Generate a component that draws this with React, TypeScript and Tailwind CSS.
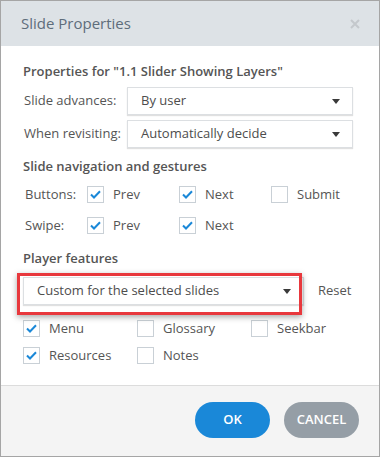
import React from 'react'

const font = { fontFamily: '"Open Sans", "Noto Sans", sans-serif' }

function Caret() {
    return (
        <svg width="8" height="5" viewBox="0 0 8 5" className="shrink-0">
            <path d="M0 0 H8 L4 5 Z" fill="#3a3a3a" />
        </svg>
    )
}

function Select({ value, className }: { value: string; className?: string }) {
    return (
        <div
            className={
                'h-[28px] flex items-center justify-between pl-[13px] pr-[12px] bg-white border border-[#dcdfe2] shadow-[0_1px_1px_rgba(0,0,0,0.12)] text-[13px] text-[#4d4d4d] ' +
                (className ?? '')
            }
        >
            <span>{value}</span>
            <Caret />
        </div>
    )
}

function Check({ label, checked }: { label: string; checked?: boolean }) {
    return (
        <div className="flex items-center gap-[9px]">
            <div className="w-[17px] h-[17px] border border-[#c9d0d6] bg-white flex items-center justify-center">
                {checked && (
                    <svg width="11" height="9" viewBox="0 0 11 9">
                        <path d="M1 4.5 L4 7.5 L10 1.2" fill="none" stroke="#1a88d8" strokeWidth="2" />
                    </svg>
                )}
            </div>
            <span className="text-[13px] text-[#555]">{label}</span>
        </div>
    )
}

export default function App() {
    return (
        <div style={font} className="w-[380px] h-[457px] border border-[#a5a5a5] flex flex-col bg-white">
            {/* Header */}
            <div className="h-[45px] shrink-0 bg-[#dde2e6] flex items-center justify-between pl-[20px] pr-[19px]">
                <span className="text-[15px] text-[#5e6d7b]">Slide Properties</span>
                <svg width="10" height="10" viewBox="0 0 10 10">
                    <path d="M1 1 L9 9 M9 1 L1 9" stroke="#c4c8cc" strokeWidth="2" />
                </svg>
            </div>

            {/* Body */}
            <div className="flex-1 pl-[22px] pr-[26px] pt-[16px]">
                <div className="h-[20px] flex items-center text-[13px] font-semibold text-[#555]">
                    Properties for "1.1 Slider Showing Layers"
                </div>
                <div className="mt-[5px] flex items-center">
                    <span className="w-[104px] pl-[1px] text-[13px] text-[#555]">Slide advances:</span>
                    <Select value="By user" className="flex-1" />
                </div>
                <div className="mt-[5px] flex items-center">
                    <span className="w-[104px] pl-[1px] text-[13px] text-[#555]">When revisiting:</span>
                    <Select value="Automatically decide" className="flex-1" />
                </div>

                <div className="mt-[9px] h-[20px] flex items-center text-[13px] font-semibold text-[#555]">
                    Slide navigation and gestures
                </div>
                <div className="mt-[7px] h-[21px] flex items-center">
                    <span className="w-[64px] pl-[2px] text-[13px] text-[#555]">Buttons:</span>
                    <div className="w-[92px]"><Check label="Prev" checked /></div>
                    <div className="w-[92px]"><Check label="Next" checked /></div>
                    <Check label="Submit" />
                </div>
                <div className="mt-[10px] h-[21px] flex items-center">
                    <span className="w-[64px] pl-[2px] text-[13px] text-[#555]">Swipe:</span>
                    <div className="w-[92px]"><Check label="Prev" checked /></div>
                    <Check label="Next" checked />
                </div>

                <div className="mt-[13px] h-[20px] flex items-center text-[13px] font-semibold text-[#555]">
                    Player features
                </div>
                <div className="mt-[8px] flex items-center">
                    <div className="relative w-[281px]">
                        <Select value="Custom for the selected slides" />
                        <div className="absolute left-[-6px] top-[-4px] w-[285px] h-[42px] border-[3px] border-[#e8383d] shadow-[0_2px_6px_rgba(0,0,0,0.35)]" />
                    </div>
                    <span className="ml-[14px] text-[13px] text-[#555]">Reset</span>
                </div>
                <div className="mt-[13px] h-[21px] flex items-center">
                    <div className="w-[114px]"><Check label="Menu" checked /></div>
                    <div className="w-[114px]"><Check label="Glossary" /></div>
                    <Check label="Seekbar" />
                </div>
                <div className="mt-[6px] h-[21px] flex items-center">
                    <div className="w-[114px]"><Check label="Resources" checked /></div>
                    <Check label="Notes" />
                </div>
            </div>

            {/* Footer */}
            <div className="h-[71px] shrink-0 border-t border-[#dcdcdc] bg-[#f4f4f4] flex items-center justify-end gap-[14px] pr-[20px] pb-[3px]">
                <button className="w-[75px] h-[36px] rounded-full bg-[#1a88d8] text-white text-[13px] font-semibold">OK</button>
                <button className="w-[75px] h-[36px] rounded-full bg-[#959ea6] text-white text-[13px] font-semibold">CANCEL</button>
            </div>
        </div>
    )
}
